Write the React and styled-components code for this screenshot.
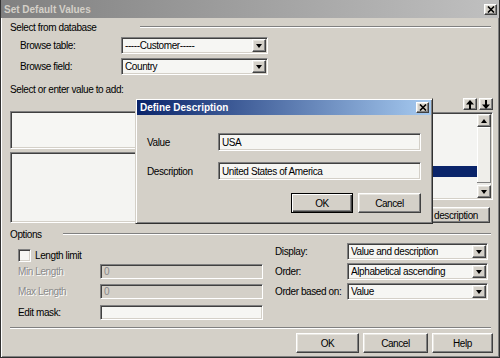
import React from "react";
import styled, { createGlobalStyle, css } from "styled-components";

const GlobalStyle = createGlobalStyle`
  html, body {
    margin: 0;
    padding: 0;
    background: #d4d0c8;
  }
  body {
    font-family: "Liberation Sans", Arial, sans-serif;
    font-size: 10px;
    letter-spacing: -0.4px;
    color: #000;
  }
  #root {
    width: 500px;
    height: 358px;
    overflow: hidden;
  }
`;

const raised = css`
  border: 1px solid;
  border-color: #fff #404040 #404040 #fff;
  box-shadow: inset -1px -1px #808080, inset 1px 1px #e8e6e0;
`;

const sunken = css`
  border: 1px solid;
  border-color: #808080 #fff #fff #808080;
  box-shadow: inset 1px 1px #404040, inset -1px -1px #d4d0c8;
`;

// rows of the value list; only the selection bar shows past the dialog
const listRows = [false, false, false, false, true, false];

const Window = styled.div`
  position: relative;
  box-sizing: border-box;
  width: 500px;
  height: 358px;
  display: flex;
  flex-direction: column;
  background: #d4d0c8;
  border: 1px solid #303030;
  border-top: none;
  box-shadow: inset 1px 0 #fff, inset -1px -1px #808080;
`;

const TitleBar = styled.div`
  display: flex;
  align-items: center;
  flex: none;
  height: ${(p) => p.$h}px;
  padding: 0 2px 0 3px;
  background: linear-gradient(to right, ${(p) => p.$from}, ${(p) => p.$to});
  color: ${(p) => p.$color};
  font-weight: bold;
  letter-spacing: 0;
`;

const TitleText = styled.span`
  flex: 1;
  white-space: nowrap;
`;

const CloseButton = styled.span`
  ${raised};
  box-sizing: border-box;
  width: 13px;
  height: 11px;
  display: flex;
  align-items: center;
  justify-content: center;
  background: #d4d0c8;
`;

const Body = styled.div`
  flex: 1;
  display: flex;
  flex-direction: column;
  padding: 0 6px 4px 9px;
`;

const GroupHeader = styled.div`
  display: flex;
  align-items: center;
  height: 12px;
  margin-top: ${(p) => p.$mt}px;
`;

const GroupLabel = styled.span`
  flex: none;
  width: ${(p) => p.$w}px;
  white-space: nowrap;
`;

const Groove = styled.div`
  flex: 1;
  height: 0;
  border-top: 1px solid #808080;
  border-bottom: 1px solid #fff;
  margin-right: 2px;
`;

const FieldRow = styled.div`
  display: flex;
  align-items: center;
  height: ${(p) => p.$h}px;
  margin-top: ${(p) => p.$mt || 0}px;
  padding-left: ${(p) => p.$indent || 0}px;
  margin-right: ${(p) => p.$mr || 0}px;
`;

const FieldLabel = styled.span`
  flex: none;
  width: ${(p) => p.$w}px;
  white-space: nowrap;
  color: ${(p) => (p.$disabled ? "#8a8a8a" : "#000")};
  text-shadow: ${(p) => (p.$disabled ? "1px 1px #fff" : "none")};
`;

const Field = styled.div`
  ${sunken};
  box-sizing: border-box;
  display: flex;
  align-items: center;
  flex: ${(p) => (p.$w ? "none" : "1")};
  width: ${(p) => (p.$w ? `${p.$w}px` : "auto")};
  height: ${(p) => p.$h}px;
  padding-left: 3px;
  background: ${(p) => (p.$disabled ? "#d4d0c8" : "#f6f6f3")};
  color: ${(p) => (p.$disabled ? "#8a8a8a" : "#000")};
  white-space: nowrap;
  overflow: hidden;
`;

const FieldText = styled.span`
  flex: 1;
  overflow: hidden;
`;

const DropButton = styled.span`
  ${raised};
  box-sizing: border-box;
  flex: none;
  width: 14px;
  height: ${(p) => p.$h}px;
  margin-right: 1px;
  display: flex;
  align-items: center;
  justify-content: center;
  background: #d4d0c8;
`;

const Triangle = styled.span`
  width: 0;
  height: 0;
  border-left: 3px solid transparent;
  border-right: 3px solid transparent;
  ${(p) =>
    p.$up
      ? css`border-bottom: 4px solid #000;`
      : css`border-top: 4px solid #000;`}
`;

const Prompt = styled.div`
  height: 12px;
  line-height: 12px;
  margin-top: 9px;
`;

const ValueArea = styled.div`
  display: flex;
  gap: 10px;
  height: 125px;
  margin-top: 2px;
`;

const ValueColumn = styled.div`
  display: flex;
  flex-direction: column;
  flex: 1;
  padding-top: 13px;
  gap: 3px;
`;

const ListColumn = styled.div`
  display: flex;
  flex-direction: column;
  align-items: flex-end;
  width: 183px;
  flex: none;
`;

const ArrowRow = styled.div`
  display: flex;
  gap: 2px;
`;

const ArrowButton = styled.span`
  ${raised};
  box-sizing: border-box;
  width: 14px;
  height: 12px;
  display: flex;
  align-items: center;
  justify-content: center;
  background: #d4d0c8;
`;

const ListBox = styled.div`
  ${sunken};
  box-sizing: border-box;
  align-self: stretch;
  display: flex;
  height: ${(p) => p.$h}px;
  margin-top: ${(p) => p.$mt || 0}px;
  padding: 1px;
  background: #f4f4f2;
`;

const ListItems = styled.div`
  flex: 1;
  padding-top: 8px;
`;

const ListRow = styled.div`
  height: 11px;
  background: ${(p) => (p.$selected ? "#0a246a" : "transparent")};
`;

const ScrollBar = styled.div`
  display: flex;
  flex-direction: column;
  width: 14px;
  flex: none;
  background: #ebeae6;
`;

const ScrollButton = styled.span`
  ${raised};
  box-sizing: border-box;
  height: 13px;
  display: flex;
  align-items: center;
  justify-content: center;
  background: #d4d0c8;
`;

const Track = styled.div`
  flex: 1;
  display: flex;
  flex-direction: column;
  padding-bottom: 2px;
`;

const Thumb = styled.div`
  flex: 1;
  border-bottom: 1px solid #808080;
  border-right: 1px solid #808080;
  box-shadow: inset 1px 1px #fff;
  background: #efeeea;
`;

const PushButton = styled.button`
  ${raised};
  box-sizing: border-box;
  flex: none;
  width: ${(p) => p.$w}px;
  height: ${(p) => p.$h}px;
  margin-top: ${(p) => p.$mt || 0}px;
  margin-right: ${(p) => p.$mr || 0}px;
  padding: 0;
  background: #d4d0c8;
  color: #000;
  font: inherit;
  letter-spacing: inherit;
  white-space: nowrap;
  overflow: hidden;
  ${(p) =>
    p.$default &&
    css`
      border: 1px solid #000;
      box-shadow: inset 1px 1px #fff, inset -1px -1px #404040, inset -2px -2px #808080;
    `}
`;

const OptionsRow = styled.div`
  display: flex;
  gap: 12px;
`;

const OptionsLeft = styled.div`
  display: flex;
  flex-direction: column;
  width: 253px;
  flex: none;
  padding-top: 9px;
`;

const OptionsRight = styled.div`
  display: flex;
  flex-direction: column;
  flex: 1;
  padding-top: 3px;
  gap: 3px;
`;

const CheckRow = styled.label`
  display: flex;
  align-items: center;
  gap: 4px;
  height: 13px;
  padding-left: 8px;
`;

const CheckBox = styled.span`
  ${sunken};
  box-sizing: border-box;
  width: 13px;
  height: 13px;
  background: #f6f6f3;
`;

const Footer = styled.div`
  margin-top: auto;
  display: flex;
  flex-direction: column;
`;

const ButtonRow = styled.div`
  display: flex;
  justify-content: flex-end;
  gap: ${(p) => p.$gap}px;
  margin-top: ${(p) => p.$mt}px;
`;

const Dialog = styled.div`
  position: absolute;
  left: 134px;
  top: 98px;
  width: 298px;
  height: 126px;
  box-sizing: border-box;
  display: flex;
  flex-direction: column;
  padding: 1px;
  background: #d4d0c8;
  border: 1px solid;
  border-color: #d4d0c8 #303030 #303030 #d4d0c8;
  box-shadow: inset 1px 1px #fff, inset -1px -1px #808080;
`;

const DialogBody = styled.div`
  display: flex;
  flex-direction: column;
  padding: 18px 10px 0 10px;
`;

const CloseIcon = () => (
  <svg width="8" height="7" viewBox="0 0 8 7">
    <path d="M1 0.5 L7 6.5 M7 0.5 L1 6.5" stroke="#000" strokeWidth="1.6" />
  </svg>
);

const ArrowIcon = ({ down }) => (
  <svg width="8" height="9" viewBox="0 0 8 9">
    <path
      d="M4 0 L8 4.5 L5 4.5 L5 9 L3 9 L3 4.5 L0 4.5 Z"
      fill="#000"
      transform={down ? "rotate(180 4 4.5)" : undefined}
    />
  </svg>
);

const Combo = ({ value, w }) => (
  <Field $w={w} $h={17}>
    <FieldText>{value}</FieldText>
    <DropButton $h={13}>
      <Triangle />
    </DropButton>
  </Field>
);

const App = () => (
  <>
    <GlobalStyle />
    <Window>
      <TitleBar $h={18} $from="#808080" $to="#c0c0c0" $color="#d4d0c8">
        <TitleText>Set Default Values</TitleText>
        <CloseButton>
          <CloseIcon />
        </CloseButton>
      </TitleBar>

      <Body>
        <GroupHeader $mt={3}>
          <GroupLabel $w={130}>Select from database</GroupLabel>
          <Groove />
        </GroupHeader>
        <FieldRow $h={17} $mt={4} $indent={10}>
          <FieldLabel $w={101}>Browse table:</FieldLabel>
          <Combo w={147} value="-----Customer-----" />
        </FieldRow>
        <FieldRow $h={17} $mt={4} $indent={10}>
          <FieldLabel $w={101}>Browse field:</FieldLabel>
          <Combo w={147} value="Country" />
        </FieldRow>

        <Prompt>Select or enter value to add:</Prompt>
        <ValueArea>
          <ValueColumn>
            <Field $h={17} />
            <ListBox $h={71} />
          </ValueColumn>
          <ListColumn>
            <ArrowRow>
              <ArrowButton>
                <ArrowIcon />
              </ArrowButton>
              <ArrowButton>
                <ArrowIcon down />
              </ArrowButton>
            </ArrowRow>
            <ListBox $h={88} $mt={2}>
              <ListItems>
                {listRows.map((sel, i) => (
                  <ListRow key={i} $selected={sel} />
                ))}
              </ListItems>
              <ScrollBar>
                <ScrollButton>
                  <Triangle $up />
                </ScrollButton>
                <Track>
                  <Thumb />
                </Track>
                <ScrollButton>
                  <Triangle />
                </ScrollButton>
              </ScrollBar>
            </ListBox>
            <PushButton $w={86} $h={16} $mt={7} $mr={3}>
              Edit description
            </PushButton>
          </ListColumn>
        </ValueArea>

        <GroupHeader $mt={5}>
          <GroupLabel $w={53}>Options</GroupLabel>
          <Groove />
        </GroupHeader>
        <OptionsRow>
          <OptionsLeft>
            <CheckRow>
              <CheckBox />
              Length limit
            </CheckRow>
            <FieldRow $h={15} $mt={2} $indent={8}>
              <FieldLabel $w={82} $disabled>Min Length</FieldLabel>
              <Field $h={15} $disabled>0</Field>
            </FieldRow>
            <FieldRow $h={15} $mt={5} $indent={8}>
              <FieldLabel $w={82} $disabled>Max Length</FieldLabel>
              <Field $h={15} $disabled>0</Field>
            </FieldRow>
            <FieldRow $h={15} $mt={6} $indent={8}>
              <FieldLabel $w={82}>Edit mask:</FieldLabel>
              <Field $h={15} />
            </FieldRow>
          </OptionsLeft>
          <OptionsRight>
            <FieldRow $h={17} $mr={5}>
              <FieldLabel $w={72}>Display:</FieldLabel>
              <Combo w={141} value="Value and description" />
            </FieldRow>
            <FieldRow $h={17} $mr={5}>
              <FieldLabel $w={72}>Order:</FieldLabel>
              <Combo w={141} value="Alphabetical ascending" />
            </FieldRow>
            <FieldRow $h={17} $mr={5}>
              <FieldLabel $w={72}>Order based on:</FieldLabel>
              <Combo w={141} value="Value" />
            </FieldRow>
          </OptionsRight>
        </OptionsRow>

        <Footer>
          <Groove />
          <ButtonRow $gap={4} $mt={4}>
            <PushButton $w={63} $h={20}>OK</PushButton>
            <PushButton $w={65} $h={20}>Cancel</PushButton>
            <PushButton $w={61} $h={20}>Help</PushButton>
          </ButtonRow>
        </Footer>
      </Body>

      <Dialog>
        <TitleBar $h={15} $from="#0a246a" $to="#a6caf0" $color="#fff">
          <TitleText>Define Description</TitleText>
          <CloseButton>
            <CloseIcon />
          </CloseButton>
        </TitleBar>
        <DialogBody>
          <FieldRow $h={18}>
            <FieldLabel $w={71}>Value</FieldLabel>
            <Field $h={18}>USA</Field>
          </FieldRow>
          <FieldRow $h={18} $mt={11}>
            <FieldLabel $w={71}>Description</FieldLabel>
            <Field $h={18}>United States of America</Field>
          </FieldRow>
          <ButtonRow $gap={5} $mt={13}>
            <PushButton $w={62} $h={20} $default>OK</PushButton>
            <PushButton $w={63} $h={20}>Cancel</PushButton>
          </ButtonRow>
        </DialogBody>
      </Dialog>
    </Window>
  </>
);

export default App;
